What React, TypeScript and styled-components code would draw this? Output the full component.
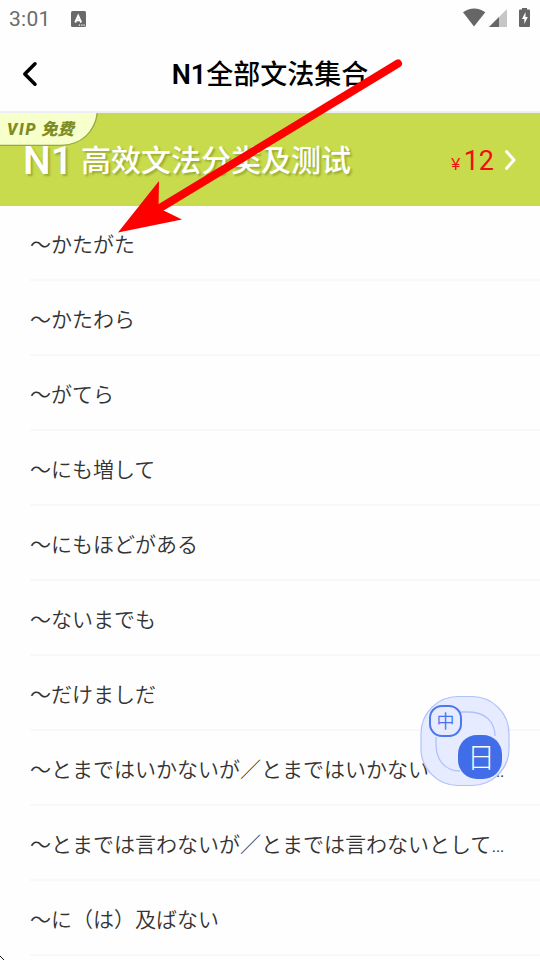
import React from "react";
import styled, { createGlobalStyle } from "styled-components";

const GlobalStyle = createGlobalStyle`
  * { box-sizing: border-box; }
  html, body { margin: 0; padding: 0; overflow: hidden; background: #fefefe; }
`;

const Screen = styled.div`
  position: relative;
  width: 540px;
  height: 960px;
  overflow: hidden;
  background: #fefefe;
  font-family: Roboto, "Noto Sans CJK SC", sans-serif;
`;

const StatusBar = styled.div`
  display: flex;
  align-items: center;
  justify-content: space-between;
  height: 37px;
  padding: 0 9px;
  color: #6b6b6b;
`;

const StatusGroup = styled.div`
  display: flex;
  align-items: center;
  height: 36px;
  svg { display: block; }
`;

const Clock = styled.span`
  width: 62px;
  padding-top: 2px;
  font-size: 21px;
  line-height: 37px;
  letter-spacing: 0.3px;
`;

const Header = styled.header`
  display: grid;
  grid-template-columns: 60px 1fr 60px;
  align-items: center;
  height: 76px;
  border-bottom: 2px solid #ededf5;
`;

const BackButton = styled.button`
  height: 74px;
  padding: 0 0 0 21px;
  border: 0;
  background: none;
  text-align: left;
  svg { display: block; }
`;

const Title = styled.h1`
  margin: 0;
  padding-top: 2px;
  text-align: center;
  font-size: 27px;
  font-weight: 500;
  line-height: 72px;
  color: #000;
  white-space: nowrap;
`;

const LatinTitle = styled.span`
  font-weight: 600;
`;

const Banner = styled.section`
  position: relative;
  display: flex;
  align-items: center;
  height: 93px;
  padding: 0 22px 0 23px;
  background: #c8db4c;
`;

const Level = styled.span`
  width: 58px;
  padding-top: 4px;
  font-size: 39px;
  font-weight: 500;
  line-height: 89px;
  color: #fff;
  text-shadow: 2px 2px 2px rgba(90, 105, 20, 0.4);
`;

const BannerTitle = styled.span`
  flex: 1;
  padding-top: 2px;
  font-size: 30px;
  font-weight: 500;
  line-height: 91px;
  color: #fff;
  text-shadow: 2px 2px 2px rgba(90, 105, 20, 0.4);
`;

const Price = styled.span`
  display: flex;
  align-items: baseline;
  margin-right: 10px;
  padding-top: 7px;
  color: #f10d0d;
  font-size: 27px;
  line-height: 86px;
`;

const Currency = styled.span`
  width: 12.5px;
  font-family: "Liberation Sans", sans-serif;
  font-size: 16px;
`;

const Ribbon = styled.div`
  position: absolute;
  left: 0;
  top: 0;
  width: 100px;
  height: 34px;
  svg { position: absolute; inset: 0; }
`;

const RibbonText = styled.div`
  position: relative;
  display: flex;
  align-items: baseline;
  padding-left: 7px;
  font-size: 16.5px;
  line-height: 33px;
  font-weight: 900;
  font-style: italic;
  color: #7e8c24;
`;

const Vip = styled.span`
  width: 34px;
  font-family: Roboto, sans-serif;
  font-size: 16px;
  font-weight: 900;
  letter-spacing: 1.8px;
`;

const List = styled.ul`
  margin: 0;
  padding: 0 0 0 30px;
  list-style: none;
`;

const Row = styled.li`
  height: 75px;
  border-bottom: 2px solid #f7f7fc;
  font-family: Roboto, "Noto Sans CJK JP", sans-serif;
  font-size: 21px;
  font-weight: 350;
  line-height: 79px;
  color: #333;
  white-space: nowrap;
  overflow: hidden;
`;

const Pointer = styled.svg`
  position: absolute;
  left: 110px;
  top: 50px;
`;

const Translate = styled.button`
  position: absolute;
  left: 420px;
  top: 695px;
  width: 90px;
  height: 92px;
  padding: 0;
  border: 0;
  background: none;
  > svg { position: absolute; left: 0; top: 0; }
`;

const Language = styled.span<{ $target?: boolean }>`
  position: absolute;
  left: ${(p) => (p.$target ? 38 : 9)}px;
  top: ${(p) => (p.$target ? 40 : 10)}px;
  width: ${(p) => (p.$target ? 44 : 33)}px;
  height: ${(p) => (p.$target ? 44 : 32)}px;
  border: ${(p) => (p.$target ? "0" : "2px solid #4c78ec")};
  border-radius: ${(p) => (p.$target ? 19 : 13)}px;
  background: ${(p) => (p.$target ? "#426de8" : "#e6ebff")};
  color: ${(p) => (p.$target ? "#fff" : "#4674ee")};
  font-family: "Noto Sans CJK SC", sans-serif;
  font-size: ${(p) => (p.$target ? 28 : 18)}px;
  font-weight: ${(p) => (p.$target ? 300 : 350)};
  line-height: ${(p) => (p.$target ? 43 : 27)}px;
  padding-left: ${(p) => (p.$target ? 2 : 0)}px;
  text-align: center;
`;

const CornerMark = styled.svg`
  position: absolute;
  left: 0;
  bottom: 0;
`;

const grammar = [
  "～かたがた",
  "～かたわら",
  "～がてら",
  "～にも増して",
  "～にもほどがある",
  "～ないまでも",
  "～だけましだ",
  "～とまではいかないが／とまではいかないとして…",
  "～とまでは言わないが／とまでは言わないとして…",
  "～に（は）及ばない",
];

export default function App() {
  return (
    <>
      <GlobalStyle />
      <Screen>
        <StatusBar>
          <StatusGroup>
            <Clock>3:01</Clock>
            <svg width="15" height="16" viewBox="0 0 15 16">
              <rect width="15" height="16" rx="1.500" fill="#696969" />
              <path d="M4.200 11.500 7.200 4.800l3 6.700M5.500 9.300h3.400" fill="none" stroke="#fff" strokeWidth="1.900" />
              <path d="M7.800 14.200h1.300M10.200 14.200h1.300M12.500 14.200h1.300" stroke="#fff" strokeWidth="1.200" />
            </svg>
          </StatusGroup>
          <StatusGroup>
            <svg width="69" height="21" viewBox="0 0 69 21">
              <path d="M1 4.300C7.500-.9 16.800-.9 23.300 4.300L12 18.400Z" fill="#666" />
              <path d="M45 1V19H27Z" fill="#c6c6c6" />
              <path d="M37 9V19H27Z" fill="#666" />
              <path d="M60 0H65V1.500H67Q68 1.500 68 2.500V18Q68 19 67 19H58Q57 19 57 18V2.500Q57 1.500 58 1.500H60Z" fill="#666" />
              <path d="M63.500 4 60 11H62.300V16L65.800 9H63.500Z" fill="#fff" />
            </svg>
          </StatusGroup>
        </StatusBar>
        <Header>
          <BackButton aria-label="返回">
            <svg width="17" height="26" viewBox="0 0 17 26">
              <path d="M14 2.800 3.800 13 14 23.200" fill="none" stroke="#000" strokeWidth="3.500" strokeLinecap="round" strokeLinejoin="round" />
            </svg>
          </BackButton>
          <Title>
            <LatinTitle>N1</LatinTitle>全部文法集合
          </Title>
        </Header>
        <Banner>
          <Level>N1</Level>
          <BannerTitle>高效文法分类及测试</BannerTitle>
          <Price>
            <Currency>¥</Currency>12
          </Price>
          <svg width="14" height="24" viewBox="0 0 14 24">
            <path d="M2.500 3.500 10 12 2.500 20.500" fill="none" stroke="#fff" strokeWidth="3" strokeLinecap="round" strokeLinejoin="round" />
          </svg>
          <Ribbon>
            <svg width="100" height="34" viewBox="0 0 100 34">
              <path d="M0 0H97C95 18 82 32 61 32H0Z" fill="#f7ffca" />
              <path d="M97.300 0C95 18 82 32.300 61 32.300H0" fill="none" stroke="#96a549" strokeWidth="1.300" />
            </svg>
            <RibbonText>
              <Vip>VIP</Vip>
              <span>免费</span>
            </RibbonText>
          </Ribbon>
        </Banner>
        <List>
          {grammar.map((item) => (
            <Row key={item}>{item}</Row>
          ))}
        </List>
        <Translate aria-label="翻译">
          <svg width="90" height="92" viewBox="0 0 90 92">
            <rect x="1" y="1.500" width="88" height="89" rx="37" fill="#e6ebff" stroke="#afc2f9" strokeWidth="1.200" />
            <path d="M41 17H49C65 17 75 27 75 41M16 42V49C16 66 26 76 40 76" fill="none" stroke="#afc2fa" strokeWidth="1.300" />
          </svg>
          <Language>中</Language>
          <Language $target>日</Language>
        </Translate>
        <Pointer width="300" height="190" viewBox="0 0 300 190">
          <path d="M288 13.500 50 158" stroke="#f00" strokeWidth="8" strokeLinecap="round" />
          <path d="M8 182.500 49 131 48.500 158 72 169.500Z" fill="#f00" />
        </Pointer>
        <CornerMark width="4" height="4" viewBox="0 0 4 4">
          <path d="M0 0H1V1H2V2H3V3H4V4H3V3H2V2H1V1H0Z" fill="#111" />
        </CornerMark>
      </Screen>
    </>
  );
}
